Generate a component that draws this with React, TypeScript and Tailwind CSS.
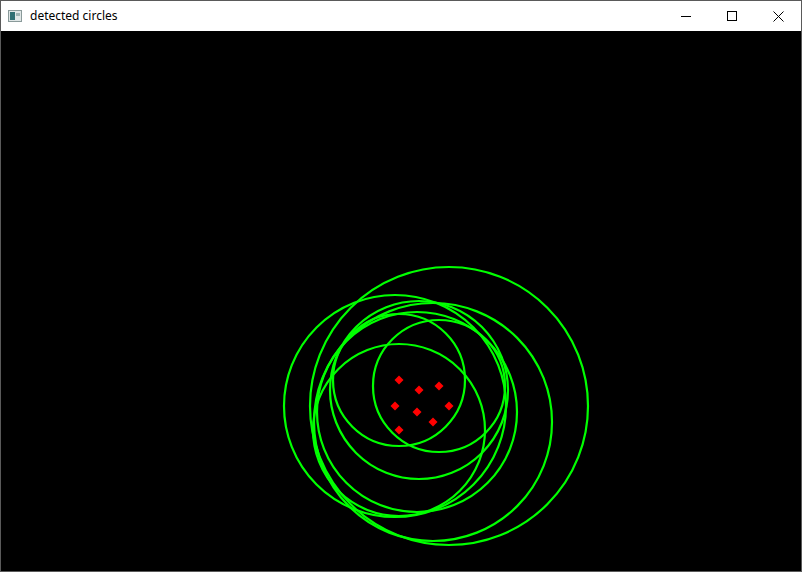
import React from "react";

const circles: [number, number, number][] = [
  [449, 406, 139],
  [395, 406, 111],
  [433, 422, 119],
  [399, 430, 86],
  [439, 386, 66],
  [419, 390, 89],
  [417, 412, 100],
  [399, 380, 66],
];

const dots: [number, number][] = [
  [399, 380],
  [419, 390],
  [439, 386],
  [395, 406],
  [417, 412],
  [449, 406],
  [433, 422],
  [399, 430],
];

const OX = 1;
const OY = 31;

export default function App() {
  return (
    <div
      className="w-[802px] h-[572px] flex flex-col bg-white border border-[#5a5a5a] overflow-hidden"
      style={{ fontFamily: '"Noto Sans", "Liberation Sans", sans-serif' }}
    >
      <div className="h-[30px] flex items-center bg-white shrink-0">
        <div className="pl-[7px] pr-[8px] flex items-center">
          <svg width="14" height="12" viewBox="0 0 14 12">
            <rect x="0.5" y="0.5" width="13" height="11" fill="#dfe6e6" stroke="#8a9a9a" />
            <rect x="2" y="2" width="5" height="8" fill="#2f6f73" />
            <rect x="8" y="3" width="4" height="3" fill="#9fb4b4" />
          </svg>
        </div>
        <span className="text-[12px] text-black leading-none">detected circles</span>
        <div className="ml-auto flex h-full">
          <div className="w-[46px] h-full flex items-center justify-center">
            <svg width="10" height="10" viewBox="0 0 10 10">
              <line x1="0" y1="5.5" x2="10" y2="5.5" stroke="#000" strokeWidth="1" />
            </svg>
          </div>
          <div className="w-[46px] h-full flex items-center justify-center">
            <svg width="10" height="10" viewBox="0 0 10 10">
              <rect x="0.5" y="0.5" width="9" height="9" fill="none" stroke="#000" strokeWidth="1" />
            </svg>
          </div>
          <div className="w-[46px] h-full flex items-center justify-center">
            <svg width="11" height="11" viewBox="0 0 11 11">
              <line x1="0.5" y1="0.5" x2="10.5" y2="10.5" stroke="#000" strokeWidth="1" />
              <line x1="10.5" y1="0.5" x2="0.5" y2="10.5" stroke="#000" strokeWidth="1" />
            </svg>
          </div>
        </div>
      </div>
      <div className="flex-1 bg-black relative">
        <svg width="800" height="540" viewBox="0 0 800 540" className="block">
          {circles.map(([x, y, r], i) => (
            <circle
              key={i}
              cx={x - OX}
              cy={y - OY}
              r={r}
              fill="none"
              stroke="#00ff00"
              strokeWidth={2.2}
            />
          ))}
          {dots.map(([x, y], i) => (
            <polygon
              key={i}
              points={`${x - OX},${y - OY - 4.5} ${x - OX + 4.5},${y - OY} ${x - OX},${y - OY + 4.5} ${x - OX - 4.5},${y - OY}`}
              fill="#ff0000"
            />
          ))}
        </svg>
      </div>
    </div>
  );
}
